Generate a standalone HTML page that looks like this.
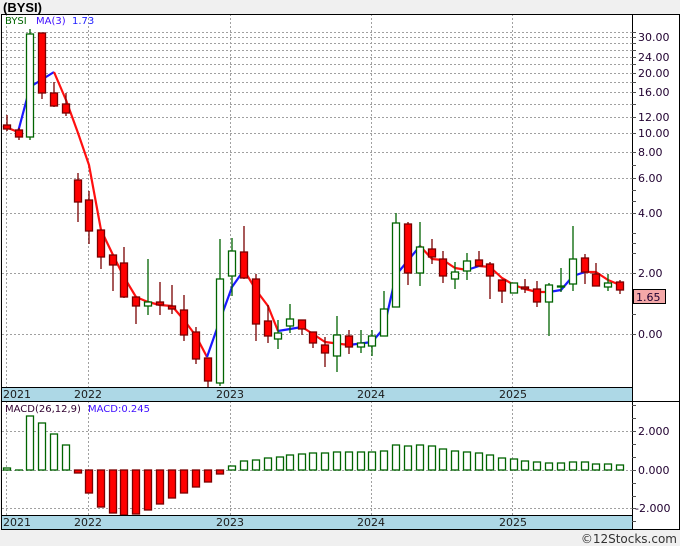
<!DOCTYPE html>
<html><head><meta charset="utf-8"><style>
html,body{margin:0;padding:0;background:#f0f0f0;}
svg{display:block;font-family:"DejaVu Sans","Liberation Sans",sans-serif;}
</style></head><body>
<svg width="680" height="546" viewBox="0 0 680 546" xmlns="http://www.w3.org/2000/svg">
<rect x="0" y="0" width="680" height="546" fill="#f0f0f0"/>
<text x="3" y="12" font-size="13" font-weight="bold" fill="#000" font-family="Liberation Sans, sans-serif">(BYSI)</text>
<rect x="1" y="14" width="679" height="516" fill="#fff"/>
<g stroke="#a0a0a0" stroke-width="1" stroke-dasharray="2,2" fill="none">
<path d="M2 32.5H632M2 37.5H632M2 43.5H632M2 50.5H632M2 57.5H632M2 64.5H632M2 73.5H632M2 82.5H632M2 92.5H632M2 104.5H632M2 117.5H632M2 133.5H632M2 152.5H632M2 178.5H632M2 213.5H632M2 273.5H632M2 334.5H632"/>
<path d="M2 431.5H632M2 470.5H632M2 508.5H632"/>
<path d="M6.5 14V387M88.5 14V387M230.5 14V387M371.5 14V387M512.5 14V387"/>
<path d="M6.5 401V515M88.5 401V515M230.5 401V515M371.5 401V515M512.5 401V515"/>
</g>
<g fill="none" stroke-width="2.2" stroke-linejoin="round">
<polyline stroke="#ff1010" points="3,126 18,132"/>
<polyline stroke="#1a1aff" points="18,132 30,87 54,72"/>
<polyline stroke="#ff1010" points="54,72 66,100 78,133 89,165 101,230 113,255 124,277 136,297 148,302 160,305 172,306 184,320 196,336 207,357"/>
<polyline stroke="#1a1aff" points="207,357 220,320 232,287 244,270"/>
<polyline stroke="#ff1010" points="244,270 256,290 268,306 278,331"/>
<polyline stroke="#1a1aff" points="278,331 290,329 302,327"/>
<polyline stroke="#ff1010" points="302,327 313,334 325,342 349,345"/>
<polyline stroke="#1a1aff" points="349,345 372,342 384,328 396,275 420,246"/>
<polyline stroke="#ff1010" points="420,246 432,259 443,260 455,268 467,270"/>
<polyline stroke="#1a1aff" points="467,270 479,266"/>
<polyline stroke="#ff1010" points="479,266 490,267 502,278 514,285 525,289 537,292 549,292"/>
<polyline stroke="#1a1aff" points="549,292 561,290 573,276 585,272"/>
<polyline stroke="#ff1010" points="585,272 596,272 608,280 620,285"/>
</g>
<g stroke="#7a0000" stroke-width="1.3" fill="#ff0000">
<path d="M7 115V131M19 128V140M42 33V99M54 82V107M66 93V116M78 173V222M89 191V244M101 230V269M113 255V291M124 247V298M136 297V324M160 282V315M172 285V314M184 295V341M196 327V364M208 358V387M244 226V279M256 274V341M268 305V343M302 320V335M313 332V348M325 337V367M349 330V354M408 222V285M432 239V264M443 251V283M479 251V266M490 262V299M502 280V303M525 279V293M537 281V307M585 254V284M596 263V286M620 280V294"/>
<rect x="3.5" y="125" width="7" height="4"/>
<rect x="15.5" y="130" width="7" height="7"/>
<rect x="38.5" y="33" width="7" height="60"/>
<rect x="50.5" y="93" width="7" height="13"/>
<rect x="62.5" y="104" width="7" height="9"/>
<rect x="74.5" y="180" width="7" height="22"/>
<rect x="85.5" y="200" width="7" height="31"/>
<rect x="97.5" y="230" width="7" height="27"/>
<rect x="109.5" y="255" width="7" height="10"/>
<rect x="120.5" y="263" width="7" height="34"/>
<rect x="132.5" y="297" width="7" height="9"/>
<rect x="156.5" y="302" width="7" height="3"/>
<rect x="168.5" y="306" width="7" height="3"/>
<rect x="180.5" y="310" width="7" height="25"/>
<rect x="192.5" y="332" width="7" height="27"/>
<rect x="204.5" y="358" width="7" height="23"/>
<rect x="240.5" y="252" width="7" height="26"/>
<rect x="252.5" y="279" width="7" height="45"/>
<rect x="264.5" y="321" width="7" height="15"/>
<rect x="298.5" y="320" width="7" height="9"/>
<rect x="309.5" y="332" width="7" height="11"/>
<rect x="321.5" y="345" width="7" height="8"/>
<rect x="345.5" y="336" width="7" height="11"/>
<rect x="404.5" y="224" width="7" height="49"/>
<rect x="428.5" y="249" width="7" height="8"/>
<rect x="439.5" y="259" width="7" height="17"/>
<rect x="475.5" y="260" width="7" height="6"/>
<rect x="486.5" y="264" width="7" height="12"/>
<rect x="498.5" y="280" width="7" height="11"/>
<rect x="521.5" y="287" width="7" height="2"/>
<rect x="533.5" y="289" width="7" height="13"/>
<rect x="581.5" y="258" width="7" height="14"/>
<rect x="592.5" y="274" width="7" height="12"/>
<rect x="616.5" y="282" width="7" height="8"/>
</g>
<g stroke="#006400" stroke-width="1.3" fill="#fff">
<path d="M30 29V140M148 259V315M220 239V386M232 238V296M278 320V349M290 304V333M337 316V372M361 330V353M372 330V356M384 291V336M396 213V307M420 222V286M455 262V289M467 253V280M514 283V293M549 283V336M561 268V292M573 226V291M608 274V291"/>
<rect x="26.5" y="34" width="7" height="103"/>
<rect x="144.5" y="302" width="7" height="4"/>
<rect x="216.5" y="279" width="7" height="104"/>
<rect x="228.5" y="251" width="7" height="25"/>
<rect x="274.5" y="333" width="7" height="6"/>
<rect x="286.5" y="319" width="7" height="7"/>
<rect x="333.5" y="335" width="7" height="21"/>
<rect x="357.5" y="343" width="7" height="4"/>
<rect x="368.5" y="336" width="7" height="10"/>
<rect x="380.5" y="309" width="7" height="27"/>
<rect x="392.5" y="223" width="7" height="84"/>
<rect x="416.5" y="247" width="7" height="26"/>
<rect x="451.5" y="272" width="7" height="7"/>
<rect x="463.5" y="261" width="7" height="10"/>
<rect x="510.5" y="283" width="7" height="10"/>
<rect x="545.5" y="285" width="7" height="17"/>
<rect x="557.5" y="286" width="7" height="1"/>
<rect x="569.5" y="259" width="7" height="25"/>
<rect x="604.5" y="283" width="7" height="4"/>
</g>
<text x="5" y="24" font-size="10" fill="#006400">BYSI</text>
<text x="36" y="24" font-size="10" fill="#4010ff">MA(3)</text>
<text x="72" y="24" font-size="10" fill="#2020ff">1.73</text>
<g stroke="#006400" stroke-width="1.3" fill="#fff">
<rect x="3.5" y="468" width="7" height="2"/>
<path d="M15 470H23"/>
<rect x="26.5" y="416" width="7" height="54"/>
<rect x="38.5" y="423" width="7" height="47"/>
<rect x="50.5" y="434" width="7" height="36"/>
<rect x="62.5" y="445" width="7" height="25"/>
<rect x="228.5" y="466" width="7" height="4"/>
<rect x="240.5" y="461" width="7" height="9"/>
<rect x="252.5" y="460" width="7" height="10"/>
<rect x="264.5" y="458" width="7" height="12"/>
<rect x="276.5" y="457" width="7" height="13"/>
<rect x="286.5" y="455" width="7" height="15"/>
<rect x="298.5" y="454" width="7" height="16"/>
<rect x="309.5" y="453" width="7" height="17"/>
<rect x="321.5" y="453" width="7" height="17"/>
<rect x="333.5" y="452" width="7" height="18"/>
<rect x="345.5" y="452" width="7" height="18"/>
<rect x="357.5" y="452" width="7" height="18"/>
<rect x="368.5" y="452" width="7" height="18"/>
<rect x="380.5" y="451" width="7" height="19"/>
<rect x="392.5" y="445" width="7" height="25"/>
<rect x="404.5" y="446" width="7" height="24"/>
<rect x="416.5" y="445" width="7" height="25"/>
<rect x="428.5" y="446" width="7" height="24"/>
<rect x="439.5" y="449" width="7" height="21"/>
<rect x="451.5" y="451" width="7" height="19"/>
<rect x="463.5" y="452" width="7" height="18"/>
<rect x="475.5" y="453" width="7" height="17"/>
<rect x="486.5" y="455" width="7" height="15"/>
<rect x="498.5" y="458" width="7" height="12"/>
<rect x="510.5" y="459" width="7" height="11"/>
<rect x="521.5" y="461" width="7" height="9"/>
<rect x="533.5" y="462" width="7" height="8"/>
<rect x="545.5" y="463" width="7" height="7"/>
<rect x="557.5" y="463" width="7" height="7"/>
<rect x="569.5" y="462" width="7" height="8"/>
<rect x="581.5" y="462" width="7" height="8"/>
<rect x="592.5" y="464" width="7" height="6"/>
<rect x="604.5" y="464" width="7" height="6"/>
<rect x="616.5" y="465" width="7" height="5"/>
</g>
<g stroke="#7a0000" stroke-width="1.3" fill="#ff0000">
<rect x="74.5" y="470" width="7" height="3"/>
<rect x="85.5" y="470" width="7" height="23"/>
<rect x="97.5" y="470" width="7" height="37"/>
<rect x="109.5" y="470" width="7" height="43"/>
<rect x="120.5" y="470" width="7" height="45"/>
<rect x="132.5" y="470" width="7" height="44"/>
<rect x="144.5" y="470" width="7" height="40"/>
<rect x="156.5" y="470" width="7" height="34"/>
<rect x="168.5" y="470" width="7" height="28"/>
<rect x="180.5" y="470" width="7" height="23"/>
<rect x="192.5" y="470" width="7" height="17"/>
<rect x="204.5" y="470" width="7" height="12"/>
<rect x="216.5" y="470" width="7" height="4"/>
</g>
<text x="5" y="412" font-size="10" fill="#300030">MACD(26,12,9)</text>
<text x="88" y="412" font-size="10" fill="#4010ff">MACD:0.245</text>
<rect x="1" y="387" width="631" height="14" fill="#add8e6"/>
<rect x="1" y="515" width="631" height="14" fill="#add8e6"/>
<g font-size="11" fill="#1a1a1a">
<text x="3" y="398">2021</text><text x="74" y="398">2022</text><text x="216" y="398">2023</text><text x="357" y="398">2024</text><text x="499" y="398">2025</text>
<text x="3" y="526">2021</text><text x="74" y="526">2022</text><text x="216" y="526">2023</text><text x="357" y="526">2024</text><text x="499" y="526">2025</text>
</g>
<g stroke="#000" stroke-width="1" fill="none">
<path d="M1 14.5H680M1.5 14V530M632.5 14V530M1 387.5H632M1 401.5H680M1 515.5H632M1 529.5H680M679.5 14V530"/>
</g>
<g stroke="#505050" stroke-width="1">
<path d="M632 32.5h4M632 37.5h4M632 43.5h4M632 50.5h4M632 57.5h4M632 64.5h4M632 73.5h4M632 82.5h4M632 92.5h4M632 104.5h4M632 117.5h4M632 133.5h4M632 152.5h4M632 165.5h4M632 178.5h4M632 190.5h4M632 201.5h4M632 213.5h4M632 233.5h4M632 243.5h4M632 253.5h4M632 273.5h4M632 314.5h4M632 334.5h4"/>
<path d="M632 405.5h4M632 418.5h4M632 431.5h4M632 444.5h4M632 457.5h4M632 470.5h4M632 483.5h4M632 496.5h4M632 508.5h4M632 521.5h4"/>
</g>
<g font-size="11" fill="#200030">
<text x="638" y="41">30.00</text>
<text x="638" y="61">24.00</text>
<text x="638" y="77">20.00</text>
<text x="638" y="96">16.00</text>
<text x="638" y="121">12.00</text>
<text x="638" y="137">10.00</text>
<text x="638" y="156">8.00</text>
<text x="638" y="182">6.00</text>
<text x="638" y="217">4.00</text>
<text x="638" y="277">2.00</text>
<text x="638" y="338">0.00</text>
<text x="638" y="435">2.000</text>
<text x="638" y="474">0.000</text>
<text x="635" y="512">-2.000</text>
</g>
<rect x="633.5" y="289.5" width="32" height="14" fill="#f4a8a8" stroke="#000"/>
<text x="636" y="301" font-size="11" fill="#200030">1.65</text>
<text x="677" y="543" font-size="12" fill="#333" text-anchor="end">©12Stocks.com</text>
</svg>
</body></html>
